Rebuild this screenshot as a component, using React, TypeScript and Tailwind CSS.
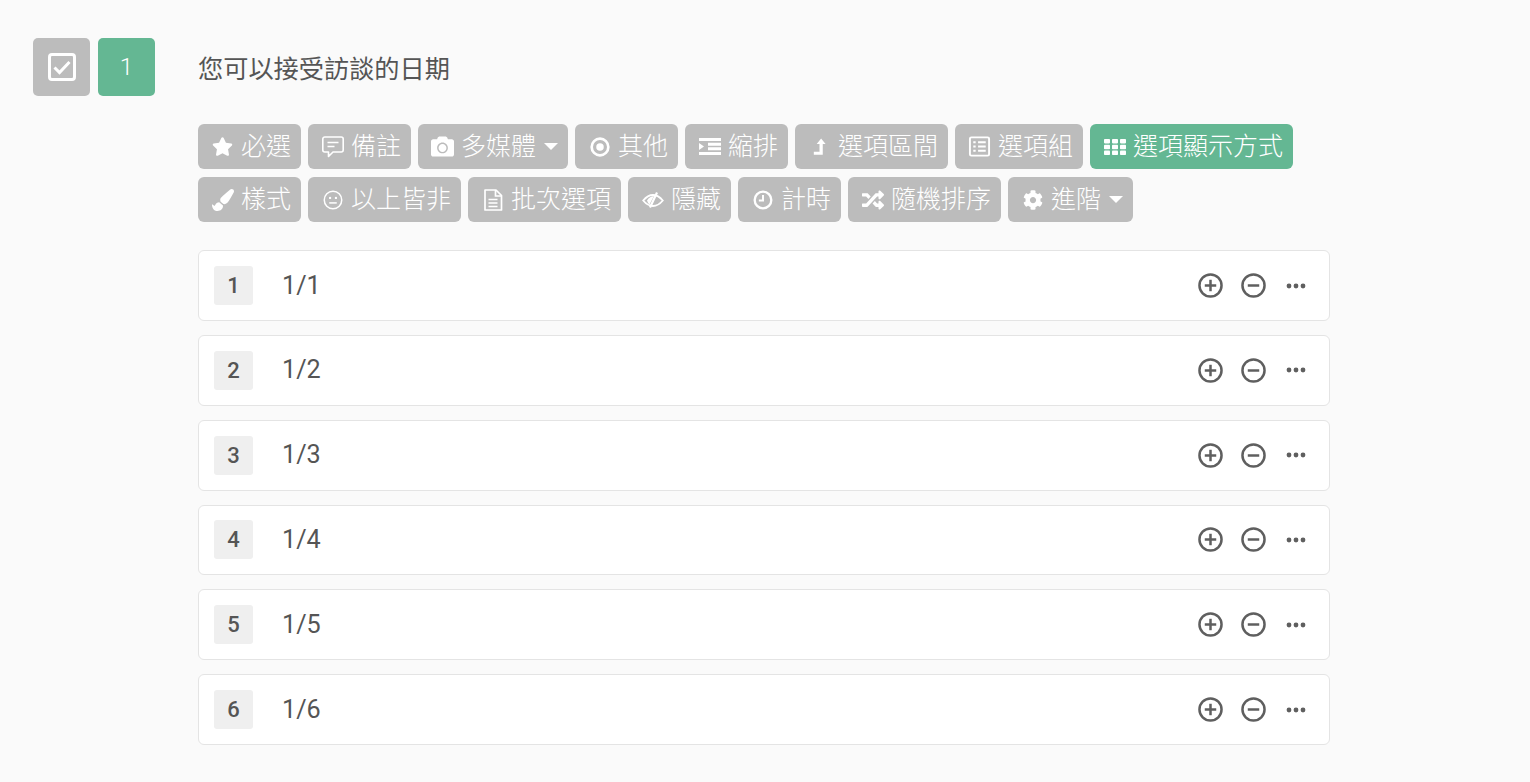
import { ReactNode } from "react"
import { FaCamera, FaCog, FaPaintBrush, FaRandom, FaStar } from "react-icons/fa"

const CommentIcon = () => (
  <svg viewBox="0 0 22 22" className="w-[22px] h-[22px]" fill="none" stroke="currentColor" strokeWidth="1.6">
    <path d="M2.800 1h16.400a2 2 0 0 1 2 2v11a2 2 0 0 1-2 2h-8.200l-4.500 4.500V16H2.800a2 2 0 0 1-2-2V3a2 2 0 0 1 2-2z" strokeLinejoin="round" />
    <path d="M5.500 6.500h11M5.500 10.500h7" />
  </svg>
)

const TargetIcon = () => (
  <svg viewBox="0 0 24 24" className="w-[20px] h-[20px]" fill="none" stroke="currentColor">
    <circle cx="12" cy="12" r="10" strokeWidth="3.200" />
    <circle cx="12" cy="12" r="4.500" fill="currentColor" stroke="none" />
  </svg>
)

const IndentIcon = () => (
  <svg viewBox="0 0 22 17" className="w-[22px] h-[17px]" fill="currentColor">
    <path d="M0 0h22v3H0zM9 4.700h13v3H9zM9 9.300h13v3H9zM0 14h22v3H0zM0 5l5 3.500-5 3.500z" />
  </svg>
)

const LevelUpIcon = () => (
  <svg viewBox="0 0 16 20" className="w-[13px] h-[17px]" fill="currentColor">
    <path d="M10 0l5.500 7H12v13H1v-3.600h7V7H4.500z" />
  </svg>
)

const ListIcon = () => (
  <svg viewBox="0 0 24 24" className="w-[23px] h-[23px]" fill="none" stroke="currentColor" strokeWidth="2">
    <rect x="2" y="2.500" width="20" height="19" rx="1.500" />
    <path d="M5.500 7.500h2.500M10.500 7.500h8M5.500 12h2.500M10.500 12h8M5.500 16.500h2.500M10.500 16.500h8" />
  </svg>
)

const MehIcon = () => (
  <svg viewBox="0 0 24 24" className="w-[20px] h-[20px]" fill="none" stroke="currentColor" strokeWidth="1.800">
    <circle cx="12" cy="12" r="10.500" />
    <path d="M7.500 15.500h9" />
    <circle cx="8.500" cy="9.500" r="1.400" fill="currentColor" stroke="none" />
    <circle cx="15.500" cy="9.500" r="1.400" fill="currentColor" stroke="none" />
  </svg>
)

const FileIcon = () => (
  <svg viewBox="0 0 20 22" className="w-[20px] h-[22px]" fill="none" stroke="currentColor" strokeWidth="1.700">
    <path d="M2 1h11l5.500 5.500V21H2z" strokeLinejoin="round" />
    <path d="M12.500 1v6h6M5.500 10.500h9M5.500 14h9M5.500 17.500h9" />
  </svg>
)

const EyeOffIcon = () => (
  <svg viewBox="0 0 22 16" className="w-[22px] h-[16px]" fill="none" stroke="currentColor" strokeWidth="1.800">
    <path d="M1.200 8.500C4.500 4.500 7.500 3 11 3s6.500 1.500 9.800 5.500C17.500 12.500 14.500 14 11 14S4.500 12.500 1.200 8.500z" />
    <path d="M5 8.500c1.500-2.800 3.700-4 7-4.500L7.500 12.500C6.300 11.500 5.500 10 5 8.500z" fill="currentColor" stroke="none" />
    <path d="M15 0.500L8 15.500" strokeWidth="2.200" />
  </svg>
)

const ClockIcon = () => (
  <svg viewBox="0 0 24 24" className="w-[20px] h-[20px]" fill="none" stroke="currentColor" strokeWidth="2.800">
    <circle cx="12" cy="12" r="10" />
    <path d="M12 6v6.500H7" strokeWidth="2.400" />
  </svg>
)

const GridIcon = () => (
  <svg viewBox="0 0 22 16" className="w-[22px] h-[16px]" fill="currentColor">
    <rect x="0" y="0" width="6" height="4.400" rx="0.800" />
    <rect x="8" y="0" width="6" height="4.400" rx="0.800" />
    <rect x="16" y="0" width="6" height="4.400" rx="0.800" />
    <rect x="0" y="5.800" width="6" height="4.400" rx="0.800" />
    <rect x="8" y="5.800" width="6" height="4.400" rx="0.800" />
    <rect x="16" y="5.800" width="6" height="4.400" rx="0.800" />
    <rect x="0" y="11.600" width="6" height="4.400" rx="0.800" />
    <rect x="8" y="11.600" width="6" height="4.400" rx="0.800" />
    <rect x="16" y="11.600" width="6" height="4.400" rx="0.800" />
  </svg>
)

const CheckSquare = () => (
  <svg viewBox="0 0 28 28" className="w-[28px] h-[28px]" fill="none" stroke="currentColor">
    <rect x="1.500" y="1.500" width="25" height="25" rx="2.500" strokeWidth="3" />
    <path d="M6.500 14.500l5 5 10-10.500" strokeWidth="3" />
  </svg>
)

const Caret = () => (
  <span className="ml-2 w-0 h-0 border-x-[7px] border-x-transparent border-t-[7px] border-t-white" />
)

type Tool = { label: string; icon: ReactNode; caret?: boolean; active?: boolean }

const tools: Tool[] = [
  { label: "必選", icon: <FaStar className="w-[21px] h-[21px]" /> },
  { label: "備註", icon: <CommentIcon /> },
  { label: "多媒體", icon: <FaCamera className="w-[23px] h-[23px]" />, caret: true },
  { label: "其他", icon: <TargetIcon /> },
  { label: "縮排", icon: <IndentIcon /> },
  { label: "選項區間", icon: <LevelUpIcon /> },
  { label: "選項組", icon: <ListIcon /> },
  { label: "選項顯示方式", icon: <GridIcon />, active: true },
  { label: "樣式", icon: <FaPaintBrush className="w-[22px] h-[22px]" /> },
  { label: "以上皆非", icon: <MehIcon /> },
  { label: "批次選項", icon: <FileIcon /> },
  { label: "隱藏", icon: <EyeOffIcon /> },
  { label: "計時", icon: <ClockIcon /> },
  { label: "隨機排序", icon: <FaRandom className="w-[22px] h-[22px]" /> },
  { label: "進階", icon: <FaCog className="w-[20px] h-[20px]" />, caret: true },
]

const options = ["1/1", "1/2", "1/3", "1/4", "1/5", "1/6"]

const CircleAction = ({ plus }: { plus?: boolean }) => (
  <svg viewBox="0 0 24 24" className="w-[25px] h-[25px] text-[#5f5f5f]" fill="none" stroke="currentColor" strokeWidth="2.400">
    <circle cx="12" cy="12" r="10.600" />
    <path d="M6.500 12h11" />
    {plus && <path d="M12 6.500v11" />}
  </svg>
)

export default function App() {
  return (
    <div className="min-h-[782px] bg-[#fafafa] pl-[33px] pt-[38px] pr-[200px] font-['Roboto','Noto_Sans_CJK_TC',sans-serif] text-[#555]">
      <div className="flex">
        <div className="flex gap-2 w-[165px] shrink-0 items-start">
          <div className="w-[57px] h-[58px] rounded-[5px] bg-[#bcbcbc] text-white flex items-center justify-center">
            <CheckSquare />
          </div>
          <div className="w-[57px] h-[58px] rounded-[5px] bg-[#64b793] text-white flex items-center justify-center text-[24px] font-light">1</div>
        </div>

        <div className="w-[1132px]">
          <h1 className="text-[25.200px] leading-[64px] h-[86px] text-[#555] font-normal">您可以接受訪談的日期</h1>

          <div className="flex flex-wrap gap-x-[7px] gap-y-[8px] w-[1132px]">
            {tools.map((t) => (
              <button
                key={t.label}
                className={`h-[45px] rounded-[6px] pl-[12px] pr-[10px] flex items-center text-white text-[25px] font-light ${t.active ? "bg-[#64b793]" : "bg-[#bcbcbc]"}`}
              >
                <span className="w-[25px] mr-[6px] flex justify-center">{t.icon}</span>
                <span>{t.label}</span>
                {t.caret && <Caret />}
              </button>
            ))}
          </div>

          <div className="mt-[28.200px] flex flex-col gap-[14px]">
            {options.map((o, i) => (
              <div key={o} className="h-[70.800px] rounded-[6px] border border-[#e4e4e4] bg-white pl-[15px] pr-[23px] flex items-center">
                <span className="w-[39px] h-[39px] rounded-[3px] bg-[#efefef] flex items-center justify-center text-[22px] font-medium">{i + 1}</span>
                <span className="ml-[29px] text-[25.200px] font-normal flex-1">{o}</span>
                <div className="flex items-center gap-[18px]">
                  <CircleAction plus />
                  <CircleAction />
                  <svg viewBox="0 0 20 6" className="ml-[2px] w-[20px] h-[6px] text-[#5f5f5f]" fill="currentColor">
                    <circle cx="3" cy="3" r="2.400" />
                    <circle cx="10" cy="3" r="2.400" />
                    <circle cx="17" cy="3" r="2.400" />
                  </svg>
                </div>
              </div>
            ))}
          </div>
        </div>
      </div>
    </div>
  )
}
